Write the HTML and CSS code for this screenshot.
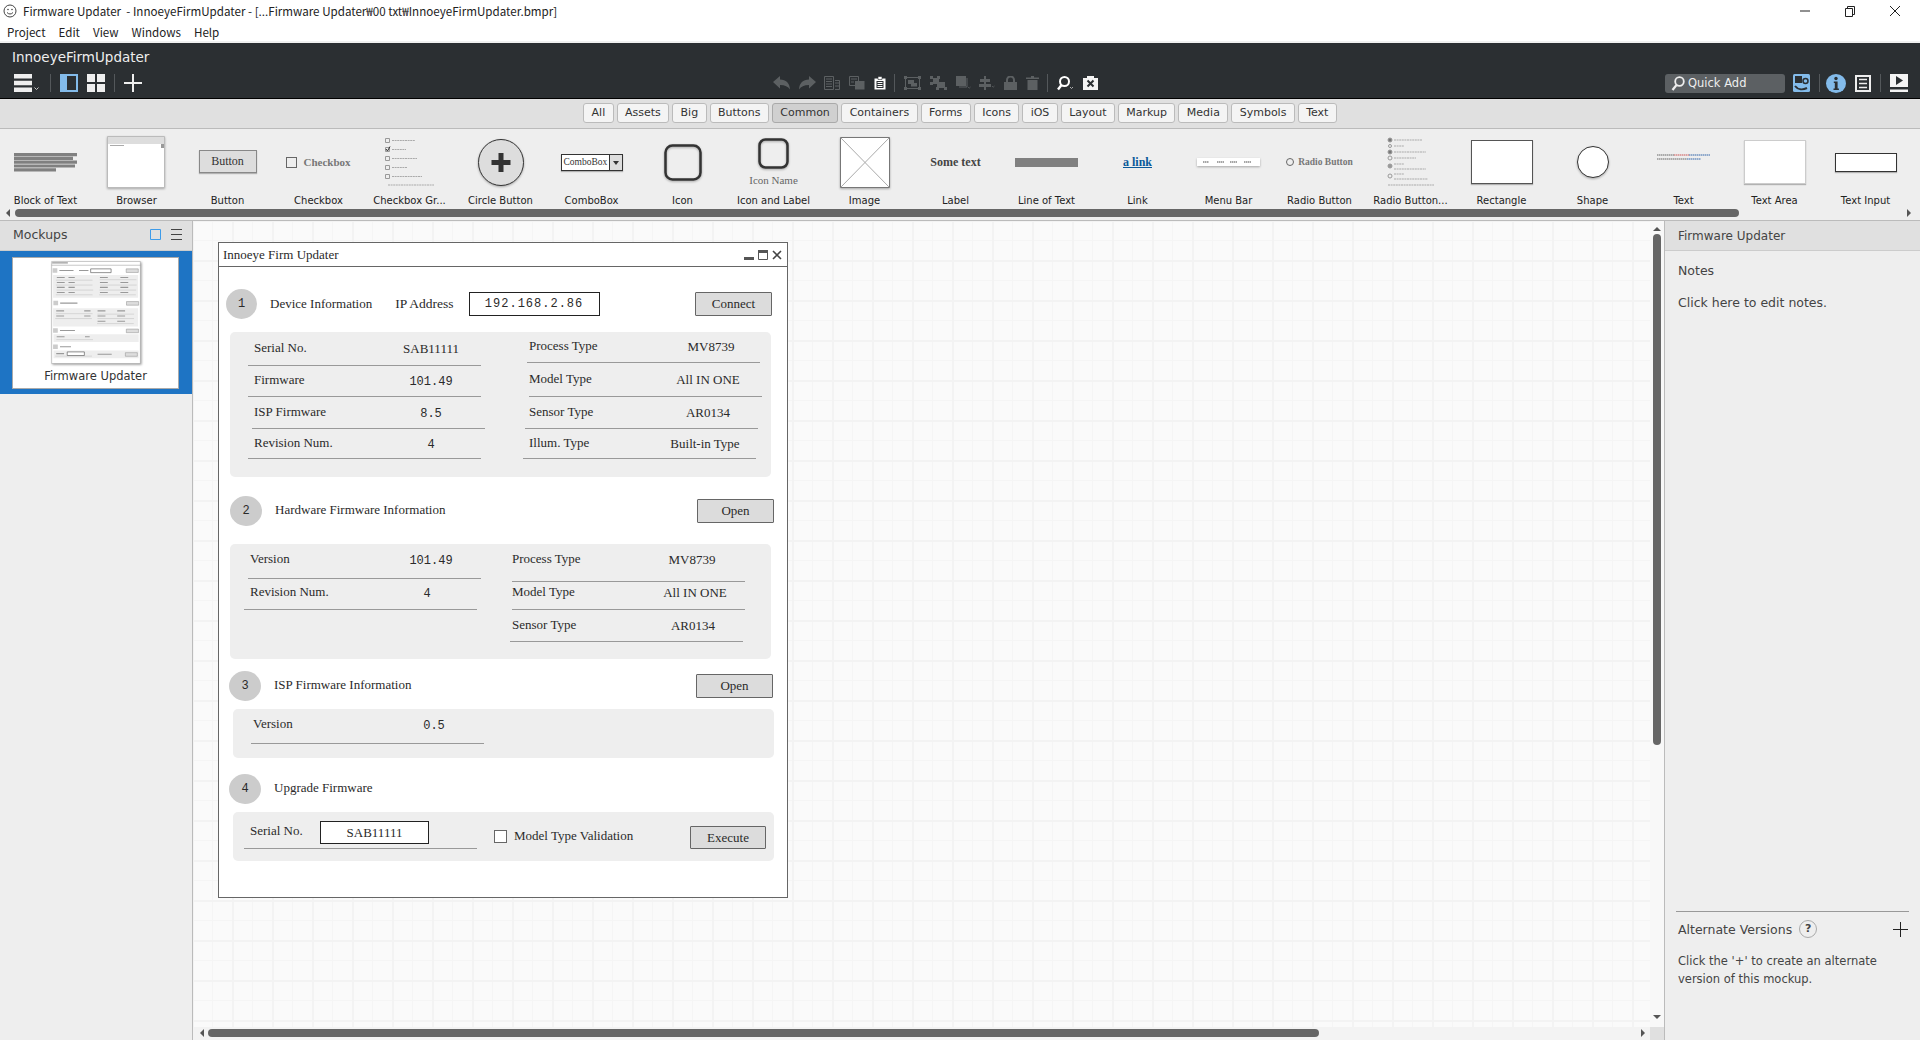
FILE: index.html
```html
<!DOCTYPE html>
<html lang="en">
<head>
  <meta charset="UTF-8">
  <title>Firmware Updater - InnoeyeFirmUpdater</title>
  <link rel="stylesheet" href="styles.css">
</head>
<body>

  <div class="titlebar">
    <svg class="app-logo" width="14" height="14" viewBox="0 0 14 14"><circle cx="7" cy="7" r="6" fill="none" stroke="#444"/><circle cx="5" cy="5.5" r=".8" fill="#444"/><circle cx="9" cy="5.5" r=".8" fill="#444"/><path d="M4 8.5c1.5 2 4.5 2 6 0" fill="none" stroke="#444"/></svg>
    <span class="title-text">Firmware Updater&nbsp; - InnoeyeFirmUpdater - [...Firmware Updater₩00 txt₩InnoeyeFirmUpdater.bmpr]</span>
    <div class="win-controls">
      <svg width="12" height="12" viewBox="0 0 12 12"><path d="M1 6h10" stroke="#222"/></svg>
      <svg width="12" height="12" viewBox="0 0 12 12"><path d="M1.5 3.5h7v8h-7zM3.5 3.5v-2h7v8h-2" fill="none" stroke="#222"/></svg>
      <svg width="12" height="12" viewBox="0 0 12 12"><path d="M1 1l10 10M11 1L1 11" stroke="#222"/></svg>
    </div>
  </div>
  <div class="menubar">
    <span>Project</span><span>Edit</span><span>View</span><span>Windows</span><span>Help</span>
  </div>

  <header class="appbar">
    <div class="project-name">InnoeyeFirmUpdater</div>
    <div class="toolbar">
      <div class="tools tools-left">
        <svg width="26" height="18" viewBox="0 0 26 18"><path d="M0 0h18v4.5H0zM0 6.8h18v4.4H0zM0 13.5h18V18H0z" fill="#eee"/><path d="M20.5 13.5l2 2 2-2" fill="none" stroke="#ccc"/></svg>
        <i class="tool-sep"></i>
        <svg width="18" height="18" viewBox="0 0 18 18"><path d="M0 0h18v18H0z" fill="#83bbea"/><path d="M7 2h9v14H7z" fill="#2b2f32"/></svg>
        <svg class="tool-gap" width="18" height="18" viewBox="0 0 18 18"><path d="M0 0h8v8H0zM10 0h8v8h-8zM0 10h8v8H0zM10 10h8v8h-8z" fill="#eee"/></svg>
        <i class="tool-sep"></i>
        <svg width="18" height="18" viewBox="0 0 18 18"><path d="M8 0h2v8h8v2h-8v8H8v-8H0V8h8z" fill="#eee"/></svg>
      </div>

      <div class="tools tools-mid">
        <svg width="17" height="14" viewBox="0 0 17 14"><path d="M0 6l7-6v3.600c6 0 9.500 3.400 10 9.900C15 10.500 12 9 7 9v3.500z" fill="#5c6062"/></svg>
        <svg width="17" height="14" viewBox="0 0 17 14"><path d="M17 6l-7-6v3.600C4 3.600.5 7 0 13.500 2 10.500 5 9 10 9v3.500z" fill="#5c6062"/></svg>
        <svg width="16" height="14" viewBox="0 0 16 14"><path d="M.5.500h9v13h-9zM2 3h6M2 5.500h6M2 8h6M2 10.500h6M11 4.500h4.500v9H11M11 7h4M11 10h4" fill="none" stroke="#5c6062"/></svg>
        <svg width="16" height="14" viewBox="0 0 16 14"><path d="M.5.500h9v9h-9z" fill="none" stroke="#5c6062"/><path d="M6 5h9.500v8.500H6z" fill="#5c6062"/><path d="M2 3h6M2 6h3" stroke="#5c6062"/></svg>
        <svg width="12" height="14" viewBox="0 0 12 14"><path d="M.5 2.500h11v11H.500z" fill="#fff"/><path d="M4 .500h4v3H4z" fill="#fff" stroke="#2b2f32" stroke-width=".6"/><path d="M2.500 5h7v7h-7z" fill="#2b2f32"/><path d="M3.500 6.500h5M3.500 8.500h5M3.500 10.500h5" stroke="#fff"/></svg>
        <i class="tool-sep sep-mid"></i>
        <svg width="17" height="14" viewBox="0 0 17 14"><path d="M1.500 1.500h14v11h-14z" fill="none" stroke="#5c6062"/><path d="M0 0h3v3H0zM14 0h3v3h-3zM0 11h3v3H0zM14 11h3v3h-3z" fill="#5c6062"/><path d="M4 4h6v4H4zM7 7h6v3.500H7z" fill="#5c6062"/></svg>
        <svg width="17" height="14" viewBox="0 0 17 14"><path d="M0 0h3v3H0zM7 0h3v3H7zM0 6h3v3H0zM3 2h6v6H3zM7 6h8v6H7zM14 11h3v3h-3zM6 11h3v3H6z" fill="#5c6062"/></svg>
        <svg width="15" height="14" viewBox="0 0 15 14"><path d="M0 0h10v10H0z" fill="#5c6062"/><path d="M11 2v9H3" fill="none" stroke="#5c6062"/><path d="M12 11l1.200 1.200 1.300-1.200" fill="none" stroke="#5c6062" stroke-width=".8"/></svg>
        <svg width="16" height="14" viewBox="0 0 16 14"><path d="M5 0h2v14H5zM1 3h10v3H1zM0 8h12v3H0z" fill="#5c6062"/><path d="M13 10l1.200 1.200 1.300-1.200" fill="none" stroke="#5c6062" stroke-width=".8"/></svg>
        <svg width="13" height="14" viewBox="0 0 13 14"><path d="M0 6h13v8H0z" fill="#5c6062"/><path d="M3 6.500V4a3.500 3.500 0 0 1 7 0v2.500" fill="none" stroke="#5c6062" stroke-width="2"/></svg>
        <svg width="13" height="14" viewBox="0 0 13 14"><path d="M5 0h3v1.500h5V3H0V1.500h5zM1.500 4h10v10h-10z" fill="#5c6062"/></svg>
        <i class="tool-sep sep-mid"></i>
        <svg width="17" height="15" viewBox="0 0 17 15"><circle cx="7.500" cy="5.500" r="4.500" fill="none" stroke="#fff" stroke-width="2"/><path d="M4.500 9L1 13.500" stroke="#fff" stroke-width="2.400"/><path d="M13 11l1.500 1.500 1.500-1.500" fill="none" stroke="#ccc" stroke-width=".8"/></svg>
        <svg width="15" height="14" viewBox="0 0 15 14"><path d="M0 2h4V0h7v2h4v12H0z" fill="#f4f4f4"/><path d="M4.500 4.500l6 6M10.500 4.500l-6 6" stroke="#2b2f32" stroke-width="2"/></svg>
      </div>

      <div class="tools tools-right">
        <div class="quick-add">
          <svg width="14" height="15" viewBox="0 0 14 15"><circle cx="8.500" cy="5.500" r="4.300" fill="none" stroke="#eee" stroke-width="1.800"/><path d="M5.500 9L1.500 14" stroke="#eee" stroke-width="2.200"/></svg>
          <span>Quick Add</span>
        </div>
        <svg width="17" height="18" viewBox="0 0 17 18"><rect width="17" height="18" rx="1.500" fill="#83bbea"/><path d="M2 2h7v7H2z" fill="#2b2f32"/><circle cx="12.500" cy="7" r="2.500" fill="none" stroke="#2b2f32" stroke-width="1.500"/><path d="M2 12c3 4 8 4 12 2" fill="none" stroke="#2b2f32" stroke-width="2"/></svg>
        <i class="tool-sep sep-tight"></i>
        <svg width="20" height="19" viewBox="0 0 20 19"><ellipse cx="10" cy="9.500" rx="10" ry="9.500" fill="#83bbea"/><circle cx="10" cy="4.500" r="1.700" fill="#2b2f32"/><path d="M7.800 7.500h3.800v7h1.300V16H7.500v-1.500h1.300V9H7.800z" fill="#2b2f32"/></svg>
        <svg class="tool-gap" width="16" height="17" viewBox="0 0 16 17"><path d="M1 1h14v15H1z" fill="none" stroke="#eee" stroke-width="2"/><path d="M4 4.500h8M4 8.500h8M4 12.500h8" stroke="#eee" stroke-width="1.600"/></svg>
        <i class="tool-sep"></i>
        <svg width="18" height="18" viewBox="0 0 18 18"><path d="M0 0h18v13H0z" fill="#f4f4f4"/><path d="M6 2l7 4.500L6 11z" fill="#2b2f32"/><path d="M0 15.500h18V18H0z" fill="#f4f4f4"/></svg>
      </div>
    </div>
  </header>

  <nav class="filterbar">
    <a class="filter">All</a>
    <a class="filter">Assets</a>
    <a class="filter">Big</a>
    <a class="filter">Buttons</a>
    <a class="filter active">Common</a>
    <a class="filter">Containers</a>
    <a class="filter">Forms</a>
    <a class="filter">Icons</a>
    <a class="filter">iOS</a>
    <a class="filter">Layout</a>
    <a class="filter">Markup</a>
    <a class="filter">Media</a>
    <a class="filter">Symbols</a>
    <a class="filter">Text</a>
  </nav>

  <section class="library">
    <div class="lib-items">
      <div class="lib-item">
        <div class="lib-thumb">
          <svg width="63" height="19" viewBox="0 0 63 19"><path d="M0 0h63v3.200H0zM0 3.800h59v3.200H0zM0 7.600h63v3.200H0zM0 11.400h61v3.200H0zM0 15.200h42v3.200H0z" fill="#808080"/></svg>
        </div>
        <div class="lib-label">Block of Text</div>
      </div>
      <div class="lib-item">
        <div class="lib-thumb nudge-left">
          <svg class="soft" width="58" height="52" viewBox="0 0 58 52"><path d="M.5.500h57v51H.500z" fill="#fff" stroke="#bbb"/><path d="M1 1h56v7H1z" fill="#ddd"/><path d="M2 8h51v3H2z" fill="#fff"/><path d="M3 9h14v1H3z" fill="#aaa"/><path d="M54 8h3v4h-3z" fill="#999"/></svg>
        </div>
        <div class="lib-label">Browser</div>
      </div>
      <div class="lib-item">
        <div class="lib-thumb"><div class="w-button">Button</div></div>
        <div class="lib-label">Button</div>
      </div>
      <div class="lib-item">
        <div class="lib-thumb"><div class="w-check"><i></i><b>Checkbox</b></div></div>
        <div class="lib-label">Checkbox</div>
      </div>
      <div class="lib-item">
        <div class="lib-thumb">
          <svg width="50" height="50" viewBox="0 0 50 50" fill="none" stroke="#999"><path d="M.5 1.500h4v4h-4zM.5 10.500h4v4h-4zM.5 19.500h4v4h-4zM.5 28.500h4v4h-4zM.5 37.500h4v4h-4z"/><path d="M1 12l1.500 2L5 9.500" stroke="#333"/><path d="M7 3.500h23M7 12.500h14M7 21.500h25M7 30.500h15M7 39.500h30M3 48h46" stroke="#aaa" stroke-width="1.200" stroke-dasharray="2 .6"/></svg>
        </div>
        <div class="lib-label">Checkbox Gr...</div>
      </div>
      <div class="lib-item">
        <div class="lib-thumb">
          <svg class="soft" width="46" height="47" viewBox="0 0 46 47"><ellipse cx="23" cy="23.500" rx="22.500" ry="23" fill="#ddd" stroke="#333"/><path d="M20.500 14h5v7h7v5h-7v7h-5v-7h-7v-5h7z" fill="#333"/></svg>
        </div>
        <div class="lib-label">Circle Button</div>
      </div>
      <div class="lib-item">
        <div class="lib-thumb"><div class="w-combo"><span>ComboBox</span><i></i></div></div>
        <div class="lib-label">ComboBox</div>
      </div>
      <div class="lib-item">
        <div class="lib-thumb">
          <svg class="soft" width="38" height="37" viewBox="0 0 38 37"><rect x="1.500" y="1.500" width="35" height="34" rx="7" fill="none" stroke="#333" stroke-width="2.500"/></svg>
        </div>
        <div class="lib-label">Icon</div>
      </div>
      <div class="lib-item">
        <div class="lib-thumb thumb-stack">
          <svg class="soft" width="31" height="31" viewBox="0 0 31 31"><rect x="1.500" y="1.500" width="28" height="28" rx="6" fill="none" stroke="#333" stroke-width="2.500"/></svg>
          <div class="w-iconname">Icon Name</div>
        </div>
        <div class="lib-label">Icon and Label</div>
      </div>
      <div class="lib-item">
        <div class="lib-thumb">
          <svg class="soft" width="50" height="51" viewBox="0 0 50 51"><path d="M.5.500h49v50H.500z" fill="#fff" stroke="#777"/><path d="M1 1l48 49M49 1L1 50" stroke="#aaa"/></svg>
        </div>
        <div class="lib-label">Image</div>
      </div>
      <div class="lib-item">
        <div class="lib-thumb"><div class="w-label">Some text</div></div>
        <div class="lib-label">Label</div>
      </div>
      <div class="lib-item">
        <div class="lib-thumb"><div class="w-line"></div></div>
        <div class="lib-label">Line of Text</div>
      </div>
      <div class="lib-item">
        <div class="lib-thumb"><div class="w-link">a link</div></div>
        <div class="lib-label">Link</div>
      </div>
      <div class="lib-item">
        <div class="lib-thumb">
          <svg class="soft" width="63" height="8" viewBox="0 0 63 8"><path d="M0 0h63v8H0z" fill="#fff"/><path d="M6 4h6M20 4h7M33 4h7M47 4h7" stroke="#888" stroke-width="1.500" stroke-dasharray="1.500 .5"/></svg>
        </div>
        <div class="lib-label">Menu Bar</div>
      </div>
      <div class="lib-item">
        <div class="lib-thumb"><div class="w-radio"><i></i><b>Radio Button</b></div></div>
        <div class="lib-label">Radio Button</div>
      </div>
      <div class="lib-item">
        <div class="lib-thumb">
          <svg width="48" height="50" viewBox="0 0 48 50" fill="none" stroke="#999"><circle cx="3" cy="3" r="2" fill="#777"/><circle cx="3" cy="9" r="1.500"/><circle cx="3" cy="15" r="2" fill="#777"/><circle cx="3" cy="21" r="2"/><circle cx="3" cy="29" r="2" fill="#999"/><circle cx="3" cy="39" r="2"/><path d="M7 3h28M7 9h10M7 15h32M7 21h22M7 27h10M7 32h32M7 37h10M7 42h34M1 48h46" stroke="#aaa" stroke-width="1.200" stroke-dasharray="2 .6"/></svg>
        </div>
        <div class="lib-label">Radio Button...</div>
      </div>
      <div class="lib-item">
        <div class="lib-thumb"><div class="w-rect"></div></div>
        <div class="lib-label">Rectangle</div>
      </div>
      <div class="lib-item">
        <div class="lib-thumb">
          <svg class="soft" width="32" height="32" viewBox="0 0 32 32"><ellipse cx="16" cy="16" rx="15.500" ry="15.500" fill="#fff" stroke="#333"/></svg>
        </div>
        <div class="lib-label">Shape</div>
      </div>
      <div class="lib-item">
        <div class="lib-thumb">
          <svg class="w-text" width="53" height="6" viewBox="0 0 53 6"><path d="M0 1h17M0 5h30" stroke="#666" stroke-dasharray="1.500 .5"/><path d="M17 1h15" stroke="#c55" stroke-dasharray="1.500 .5"/><path d="M32 1h21M30 5h14" stroke="#36a" stroke-dasharray="1.500 .5"/></svg>
        </div>
        <div class="lib-label">Text</div>
      </div>
      <div class="lib-item">
        <div class="lib-thumb"><div class="w-area"></div></div>
        <div class="lib-label">Text Area</div>
      </div>
      <div class="lib-item">
        <div class="lib-thumb"><div class="w-input"></div></div>
        <div class="lib-label">Text Input</div>
      </div>
    </div>
    <div class="lib-scroll">
      <i class="arrow arrow-left"></i>
      <div class="lib-thumbbar"></div>
      <i class="arrow arrow-right"></i>
    </div>
  </section>

  <main class="workspace">
    <aside class="mockups">
      <div class="panel-head mockups-head">
        <span>Mockups</span>
        <div class="head-icons">
          <svg width="11" height="11" viewBox="0 0 11 11"><path d="M.5.500h10v10H.500z" fill="none" stroke="#3d9be9"/></svg>
          <svg width="11" height="11" viewBox="0 0 11 11"><path d="M0 .500h11M0 5.500h11M0 10.500h11" stroke="#444"/></svg>
        </div>
      </div>
      <div class="mockup-selected">
        <div class="mockup-card">
          <svg class="mini" width="90" height="103" viewBox="0 0 570 655">
            <path d="M3 3h564v649H3z" fill="#fff" stroke="#999" stroke-width="3"/>
            <path d="M3 27h564" stroke="#888" stroke-width="3"/>
            <path d="M12 89h541v145H12zM12 301h541v115H12zM15 466h541v49H15zM15 569h541v49H15z" fill="#eee"/>
            <path d="M9 60h30M14 267h30M12 442h30M12 545h30" stroke="#ccc" stroke-width="28"/>
            <path d="M52 60h90M177 60h60M57 268h110M56 442h95M56 545h70M6 12h100M36 105h50M110 105h40M36 137h50M110 137h40M36 168h50M110 168h40M36 200h50M110 200h40M310 105h50M440 105h50M310 137h50M440 137h50M310 168h50M440 168h50M310 200h50M440 200h50M32 317h50M210 317h40M32 350h50M210 350h40M295 317h50M420 317h50M295 350h50M420 350h50M295 383h50M420 383h50M35 482h50M215 482h30M32 589h50M295 593h90" stroke="#999" stroke-width="7"/>
            <path d="M30 122h233M30 153h233M34 185h233M30 215h233M309 119h233M311 153h233M307 185h233M305 215h233M30 335h233M26 366h233M294 338h233M294 366h233M292 398h233M33 500h233M26 605h233" stroke="#bbb" stroke-width="3"/>
            <path d="M251 50h130v24H251zM102 578h109v23H102z" fill="#fff" stroke="#555" stroke-width="4"/>
            <path d="M477 50h77v23h-77zM479 258h77v23h-77zM478 433h77v23h-77zM472 583h76v23h-76z" fill="#ddd" stroke="#888" stroke-width="3"/>
          </svg>
          <div class="mockup-name">Firmware Updater</div>
        </div>
      </div>
    </aside>

    <div class="canvas">
      <div class="canvas-area">

        <div class="mock">
          <div class="mock-title">
            <span>Innoeye Firm Updater</span>
            <div class="mock-btns">
              <svg width="10" height="10" viewBox="0 0 10 10"><path d="M0 7h10v3H0z" fill="#555"/></svg>
              <svg width="10" height="10" viewBox="0 0 10 10"><path d="M.5.500h9v9h-9z" fill="none" stroke="#555"/><path d="M0 0h10v3H0z" fill="#555"/></svg>
              <svg width="10" height="10" viewBox="0 0 10 10"><path d="M1 1l8 8M9 1L1 9" stroke="#444" stroke-width="1.600"/></svg>
            </div>
          </div>

          <div class="sec-head head-1">
            <div class="step">1</div>
            <div class="sec-title">Device Information</div>
            <div class="ip-label">IP Address</div>
            <div class="mock-input ip-input">192.168.2.86</div>
            <button class="mock-btn">Connect</button>
          </div>
          <div class="mock-panel panel-1">
            <div class="col col-1a">
              <div class="row p6"><span>Serial No.</span><span class="val v100">SAB11111</span></div>
              <div class="row p6"><span>Firmware</span><span class="val v100 num">101.49</span></div>
              <div class="row x4 p2"><span>ISP Firmware</span><span class="val v108 num">8.5</span></div>
              <div class="row p6"><span>Revision Num.</span><span class="val v100 num">4</span></div>
            </div>
            <div class="col col-1b">
              <div class="row x4 p2"><span>Process Type</span><span class="val v98">MV8739</span></div>
              <div class="row x6"><span>Model Type</span><span class="val v108">All IN ONE</span></div>
              <div class="row x2 p4"><span>Sensor Type</span><span class="val v100">AR0134</span></div>
              <div class="row p6"><span>Illum. Type</span><span class="val v102">Built-in Type</span></div>
            </div>
          </div>

          <div class="sec-head head-2">
            <div class="step">2</div>
            <div class="sec-title">Hardware Firmware Information</div>
            <button class="mock-btn">Open</button>
          </div>
          <div class="mock-panel panel-2">
            <div class="col col-2a">
              <div class="row x4 p2 lift3"><span>Version</span><span class="val v100 num">101.49</span></div>
              <div class="row p6 lift2"><span>Revision Num.</span><span class="val v100 num">4</span></div>
            </div>
            <div class="col col-2b">
              <div class="row x2 lift6"><span>Process Type</span><span class="val v106">MV8739</span></div>
              <div class="row x2 lift6"><span>Model Type</span><span class="val v100">All IN ONE</span></div>
              <div class="row p2"><span>Sensor Type</span><span class="val v100">AR0134</span></div>
            </div>
          </div>

          <div class="sec-head head-3">
            <div class="step">3</div>
            <div class="sec-title">ISP Firmware Information</div>
            <button class="mock-btn">Open</button>
          </div>
          <div class="mock-panel panel-3">
            <div class="row p2 lift3"><span>Version</span><span class="val v100 num">0.5</span></div>
          </div>

          <div class="sec-head head-4">
            <div class="step">4</div>
            <div class="sec-title">Upgrade Firmware</div>
          </div>
          <div class="mock-panel panel-4">
            <div class="row p6">
              <span>Serial No.</span>
              <span class="mock-input serial-input">SAB11111</span>
            </div>
            <label class="mock-check"><i></i><span>Model Type Validation</span></label>
            <button class="mock-btn">Execute</button>
          </div>
        </div>

      </div>
      <div class="vbar">
        <i class="arrow arrow-up"></i>
        <div class="vthumb"></div>
        <i class="arrow arrow-down"></i>
      </div>
      <div class="hbar">
        <i class="arrow arrow-left"></i>
        <div class="hthumb"></div>
        <i class="arrow arrow-right"></i>
      </div>
      <div class="corner"></div>
    </div>

    <aside class="inspector">
      <div class="panel-head">Firmware Updater</div>
      <div class="notes-title">Notes</div>
      <div class="notes-body">Click here to edit notes.</div>
      <div class="alt">
        <div class="alt-head">
          <span>Alternate Versions</span>
          <i class="help">?</i>
          <svg class="alt-add" width="15" height="15" viewBox="0 0 15 15"><path d="M7.500 0v15M0 7.500h15" stroke="#222"/></svg>
        </div>
        <p>Click the '+' to create an alternate version of this mockup.</p>
      </div>
    </aside>
  </main>

</body>
</html>
```

FILE: styles.css
```css
* {
  box-sizing: border-box;
}
body {
  margin: 0;
  height: 1040px;
  overflow: hidden;
  display: flex;
  flex-direction: column;
  font-family: "DejaVu Sans", sans-serif;
  background: #fff;
  color: #333;
}

/* window chrome */
.titlebar {
  height: 22px;
  display: flex;
  align-items: center;
  padding-left: 3px;
  font: 11.6px "Noto Sans CJK KR", "Noto Sans", sans-serif;
  color: #222;
}
.title-text {
  margin-left: 6px;
}
.win-controls {
  margin-left: auto;
  display: flex;
  gap: 33px;
  padding-right: 19px;
}
.menubar {
  height: 21px;
  display: flex;
  align-items: center;
  gap: 13px;
  padding-left: 7px;
  font: 11.6px "Noto Sans CJK KR", "Noto Sans", sans-serif;
  color: #222;
  border-bottom: 2px solid #f0f0f0;
}

/* dark app bar */
.appbar {
  height: 56px;
  background: #2b2f32;
  border-bottom: 1px solid #000;
  color: #eee;
}
.project-name {
  height: 31px;
  padding: 7px 0 0 12px;
  font-size: 13.5px;
  line-height: 14px;
}
.toolbar {
  display: flex;
  height: 19px;
  padding-left: 14px;
}
.tools {
  display: flex;
  align-items: center;
  height: 18px;
}
.tools-left svg:first-child {
  margin-right: 1px;
}
.tool-sep {
  width: 1px;
  height: 18px;
  background: #54585b;
  margin: 0 9px;
}
.tool-gap {
  margin-left: 9px;
}
.tools-mid {
  margin-left: 631px;
  gap: 8.7px;
}
.sep-mid {
  margin: 0;
}
.tools-right {
  margin-left: auto;
  padding-right: 12px;
}
.sep-tight {
  margin-right: 6px;
}
.quick-add {
  width: 120px;
  height: 19px;
  display: flex;
  align-items: center;
  gap: 3px;
  padding-left: 6px;
  margin-right: 8px;
  background: #5c6063;
  border-radius: 3px;
  font-size: 11.5px;
  color: #eee;
}

/* filter bar */
.filterbar {
  height: 30px;
  display: flex;
  justify-content: center;
  align-items: flex-start;
  gap: 3px;
  padding-top: 4px;
  background: #e0e0e0;
  border-bottom: 1px solid #bbb;
}
.filter {
  height: 20px;
  padding: 0 7.4px;
  line-height: 18px;
  font-size: 11px;
  background: #f4f4f4;
  border: 1px solid #bbb;
  border-radius: 3px;
  color: #333;
}
.filter.active {
  background: #d0d0d0;
  border-color: #aaa;
}

/* component library */
.library {
  height: 91px;
  background: #eee;
}
.lib-items {
  display: flex;
  height: 80px;
}
.lib-item {
  width: 91px;
  flex: none;
}
.lib-thumb {
  height: 66px;
  display: flex;
  align-items: center;
  justify-content: center;
}
.nudge-left {
  padding-right: 2px;
}
.thumb-stack {
  flex-direction: column;
  gap: 5px;
}
.lib-label {
  font-size: 10px;
  line-height: 12px;
  text-align: center;
  color: #222;
}
.soft {
  filter: drop-shadow(0 1px 1px rgba(0, 0, 0, .3));
}
.lib-scroll {
  display: flex;
  align-items: center;
  height: 8px;
  padding-left: 6px;
}
.lib-thumbbar {
  width: 1724px;
  height: 8px;
  margin-left: 5px;
  background: #666;
  border-radius: 4px;
}
.lib-scroll .arrow-right {
  margin-left: 168px;
}

.arrow {
  width: 0;
  height: 0;
  flex: none;
  border: 4px solid transparent;
}
.arrow-left {
  border-right: 4px solid #555;
  border-left: 0;
}
.arrow-right {
  border-left: 4px solid #555;
  border-right: 0;
}
.arrow-up {
  border-bottom: 4px solid #555;
  border-top: 0;
}
.arrow-down {
  border-top: 4px solid #555;
  border-bottom: 0;
}

/* library widgets */
.w-button {
  width: 58px;
  height: 23px;
  margin-top: -1px;
  font: 12px/21px "Liberation Serif", serif;
  text-align: center;
  background: #ddd;
  border: 1px solid #888;
  box-shadow: 0 1px 1px rgba(0, 0, 0, .25);
}
.w-check, .w-radio {
  display: flex;
  align-items: center;
  gap: 6px;
  font: 11px "Liberation Serif", serif;
  color: #777;
}
.w-check i {
  width: 11px;
  height: 11px;
  border: 1px solid #666;
}
.w-radio {
  font-size: 9.5px;
  gap: 4px;
}
.w-radio i {
  width: 8px;
  height: 8px;
  border: 1px solid #666;
  border-radius: 50%;
}
.w-combo {
  width: 62px;
  height: 17px;
  display: flex;
  font: 9.5px/15px "Liberation Serif", serif;
  background: #fff;
  border: 1px solid #333;
  box-shadow: 0 1px 1px rgba(0, 0, 0, .25);
}
.w-combo span {
  flex: 1;
  padding-left: 2px;
}
.w-combo i {
  width: 13px;
  background: #ddd;
  border-left: 1px solid #333;
  position: relative;
}
.w-combo i::after {
  content: "";
  position: absolute;
  left: 3px;
  top: 6px;
  border: 3px solid transparent;
  border-top: 4px solid #333;
  border-bottom: 0;
}
.w-iconname {
  font: 11px/12px "Liberation Serif", serif;
  color: #666;
}
.w-label {
  font: bold 12px "Liberation Serif", serif;
  color: #444;
}
.w-line {
  width: 63px;
  height: 9px;
  background: #808080;
}
.w-link {
  font: bold 12px "Liberation Serif", serif;
  color: #0b5a9a;
  text-decoration: underline;
}
.w-text {
  margin-bottom: 10px;
}
.w-rect, .w-area {
  width: 62px;
  height: 44px;
  background: #fff;
  box-shadow: 0 1px 1px rgba(0, 0, 0, .25);
}
.w-rect {
  border: 1px solid #555;
}
.w-area {
  border: 1px solid #ccc;
}
.w-input {
  width: 62px;
  height: 19px;
  background: #fff;
  border: 1px solid #333;
  box-shadow: 0 1px 1px rgba(0, 0, 0, .25);
}

/* workspace */
.workspace {
  flex: 1;
  display: flex;
  min-height: 0;
  border-top: 1px solid #bbb;
}
.mockups {
  width: 193px;
  flex: none;
  background: #eee;
  border-right: 1px solid #bbb;
}
.panel-head {
  height: 30px;
  display: flex;
  align-items: center;
  justify-content: space-between;
  padding: 0 10px 0 13px;
  background: #e0e0e0;
  border-bottom: 1px solid #ccc;
  font-size: 12px;
  color: #444;
}
.mockups-head {
  font-size: 12.5px;
  padding-bottom: 2px;
}
.head-icons {
  display: flex;
  gap: 10px;
}
.mockup-selected {
  height: 143px;
  padding: 6px 13px 5px 12px;
  background: #1e74c4;
}
.mockup-card {
  height: 132px;
  background: #fff;
  border: 1px solid #aaa;
  display: flex;
  flex-direction: column;
  align-items: center;
}
.mini {
  margin-top: 3px;
  filter: drop-shadow(1px 1px 1px rgba(0, 0, 0, .4));
}
.mockup-name {
  font-size: 11.5px;
  line-height: 14px;
  margin-top: 5px;
}

/* canvas */
.canvas {
  flex: 1;
  display: grid;
  grid-template-columns: 1fr 14px;
  grid-template-rows: 1fr 13px;
  min-width: 0;
}
.canvas-area {
  position: relative;
  background-color: #fafafa;
  background-image:
    linear-gradient(#f3f3f3 2px, transparent 2px),
    linear-gradient(90deg, #f3f3f3 2px, transparent 2px),
    linear-gradient(#f5f5f5 1px, transparent 1px),
    linear-gradient(90deg, #f5f5f5 1px, transparent 1px);
  background-size: 40px 40px, 40px 40px, 20px 20px, 20px 20px;
  background-position: 0 39px, 39px 0, 0 19px, 19px 0;
}
.vbar {
  display: flex;
  flex-direction: column;
  align-items: center;
  padding-top: 6px;
  background: #f8f8f8;
}
.vthumb {
  width: 8px;
  height: 511px;
  margin-top: 3px;
  background: #666;
  border-radius: 4px;
}
.vbar .arrow-down {
  margin-top: auto;
  margin-bottom: 8px;
}
.hbar {
  display: flex;
  align-items: center;
  padding: 0 0 2px 7px;
  background: #f3f3f3;
}
.hthumb {
  width: 1111px;
  height: 8px;
  margin-left: 4px;
  background: #666;
  border-radius: 4px;
}
.hbar .arrow-right {
  margin-left: 322px;
}
.corner {
  background: #e0e0e0;
}

/* the mockup on the canvas */
.mock {
  position: absolute;
  left: 25px;
  top: 21px;
  width: 570px;
  height: 656px;
  background: #fff;
  border: 1px solid #666;
  font: 13px "Liberation Serif", serif;
  color: #2a2a2a;
}
.mock-title {
  height: 24px;
  display: flex;
  align-items: center;
  justify-content: space-between;
  padding: 0 5px 0 4px;
  border-bottom: 1px solid #666;
}
.mock-btns {
  display: flex;
  gap: 4px;
}
.sec-head {
  display: flex;
  align-items: center;
  height: 30px;
}
.step {
  width: 32px;
  height: 30px;
  flex: none;
  border-radius: 50%;
  background: #ccc;
  text-align: center;
  font: 12px/30px "Liberation Mono", monospace;
}
.sec-title {
  margin-left: 13px;
}
.head-2 .sec-title, .head-3 .sec-title, .head-4 .sec-title {
  margin-bottom: 2px;
}
.mock-btn {
  width: 77px;
  height: 24px;
  margin-left: auto;
  padding: 0;
  background: #dcdcdc;
  border: 1px solid #666;
  border-radius: 1px;
  font: 13px "Liberation Serif", serif;
  color: #2a2a2a;
}
.head-1 {
  margin-top: 22px;
  padding: 0 15px 0 7px;
}
.head-1 .step {
  width: 31px;
}
.ip-label {
  margin-left: 23px;
  font-size: 13.5px;
}
.mock-input {
  background: #fff;
  border: 1px solid #222;
  text-align: center;
}
.ip-input {
  width: 131px;
  height: 24px;
  margin-left: 15px;
  font: 12px/22px "Liberation Mono", monospace;
  letter-spacing: 1px;
}
.head-2 {
  margin-top: 19px;
  padding: 0 13px 0 11px;
}
.head-3 {
  margin-top: 12px;
  padding: 0 14px 0 10px;
}
.head-4 {
  margin-top: 16px;
  padding: 0 14px 0 10px;
}
.mock-panel {
  width: 541px;
  background: #eee;
  border-radius: 5px;
  display: flex;
}
.panel-1 {
  margin: 13px 0 0 11px;
  height: 145px;
  padding-left: 18px;
}
.panel-2 {
  margin: 18px 0 0 11px;
  height: 115px;
  padding-left: 14px;
}
.panel-3 {
  margin: 8px 0 0 14px;
  height: 49px;
  padding-left: 18px;
  align-items: flex-start;
}
.panel-3 .row {
  height: 35px;
}
.panel-4 {
  margin: 8px 0 0 14px;
  height: 49px;
  padding: 0 8px 0 11px;
  align-items: flex-start;
}
.panel-4 .row {
  height: 37px;
  padding-top: 4px;
}
.panel-4 .mock-btn {
  margin-top: 14px;
  width: 76px;
  height: 23px;
}
.col {
  width: 237px;
  display: grid;
  align-content: start;
}
.col-1a {
  grid-template-rows: 34px 31px 32px 30px;
}
.col-1b {
  margin-left: 38px;
  grid-template-rows: 31px 34px 32px 30px;
}
.col-2a {
  grid-template-rows: 35px 31px;
}
.col-2b {
  margin-left: 29px;
  grid-template-rows: 38px 28px 32px;
}
.row {
  width: 233px;
  display: flex;
  align-items: center;
  justify-content: space-between;
  border-bottom: 1px solid #999;
}
.row > span:first-child {
  margin-bottom: 2px;
}
.val {
  text-align: center;
  flex: none;
}
.num {
  font: 12px "Liberation Mono", monospace;
  margin-top: 2px;
}
.v98 { width: 98px; }
.v100 { width: 100px; }
.v102 { width: 102px; }
.v106 { width: 106px; }
.v108 { width: 108px; }
.x2 { margin-left: 2px; }
.x4 { margin-left: 4px; }
.x6 { margin-left: 6px; }
.p2 { padding-left: 2px; }
.p4 { padding-left: 4px; }
.p6 { padding-left: 6px; }
.lift2 { padding-bottom: 2px; }
.lift3 { padding-bottom: 3px; }
.lift6 { padding-bottom: 6px; }

.serial-input {
  width: 109px;
  height: 23px;
  margin-right: 48px;
  line-height: 21px;
}
.mock-check {
  display: flex;
  align-items: center;
  gap: 7px;
  height: 16px;
  margin: 16px 0 0 17px;
}
.mock-check i {
  width: 13px;
  height: 13px;
  background: #fff;
  border: 1px solid #666;
}

/* right panel */
.inspector {
  width: 256px;
  flex: none;
  display: flex;
  flex-direction: column;
  background: #eee;
  border-left: 1px solid #bbb;
  font-size: 12.5px;
  color: #444;
}
.inspector .panel-head {
  padding-left: 13px;
  font-size: 12px;
}
.notes-title {
  margin: 13px 0 0 13px;
  line-height: 14px;
}
.notes-body {
  margin: 18px 0 0 13px;
  line-height: 14px;
}
.alt {
  margin: auto 11px 0 11px;
  height: 129px;
  border-top: 1px solid #999;
}
.alt-head {
  display: flex;
  align-items: center;
  height: 34px;
  padding: 0 1px 0 2px;
  font-size: 12.5px;
}
.help {
  width: 18px;
  height: 18px;
  margin-left: 7px;
  border: 1px solid #aaa;
  border-radius: 50%;
  background: #eee;
  text-align: center;
  font: bold 11px/16px "DejaVu Sans", sans-serif;
}
.alt-add {
  margin-left: auto;
}
.alt p {
  margin: 6px 0 0 2px;
  font-size: 11.5px;
  line-height: 18px;
}
```
